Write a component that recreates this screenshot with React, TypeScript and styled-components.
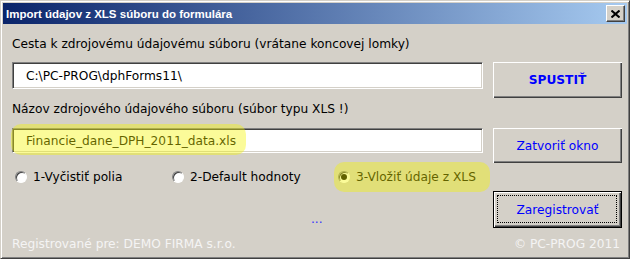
import React from 'react';
import styled, { createGlobalStyle } from 'styled-components';

const GlobalStyle = createGlobalStyle`
  html, body {
    margin: 0;
    padding: 0;
    background: #d4d0c8;
  }
  * {
    box-sizing: border-box;
  }
`;

const uiFont = `"DejaVu Sans", "Liberation Sans", sans-serif`;

const Window = styled.div`
  width: 630px;
  height: 259px;
  background: #d4d0c8;
  border-top: 1px solid #d4d0c8;
  border-left: 1px solid #d4d0c8;
  border-right: 1px solid #404040;
  border-bottom: 1px solid #404040;
  box-shadow: inset 1px 1px 0 #ffffff, inset -1px -1px 0 #808080;
  padding: 2px;
  display: flex;
  flex-direction: column;
  font-family: ${uiFont};
  font-size: 12.2px;
  color: #000;
`;

const TitleBar = styled.div`
  height: 21px;
  flex: none;
  display: flex;
  align-items: center;
  justify-content: space-between;
  padding: 0 2px 0 3px;
  background: linear-gradient(to right, #0a246a 0%, #a6caf0 100%);
`;

const Title = styled.div`
  color: #fff;
  font-family: "Liberation Sans", Arial, sans-serif;
  font-weight: bold;
  font-size: 11.5px;
`;

const CloseButton = styled.div`
  width: 19px;
  height: 17px;
  background: #d4d0c8;
  border-top: 1px solid #fff;
  border-left: 1px solid #fff;
  border-right: 1px solid #404040;
  border-bottom: 1px solid #404040;
  box-shadow: inset -1px -1px 0 #808080;
  display: flex;
  align-items: center;
  justify-content: center;
`;

const Body = styled.div`
  flex: 1;
  display: flex;
  flex-direction: column;
  padding: 12px 5px 0 9px;
`;

const Label = styled.div<{ $top: number }>`
  height: 16px;
  line-height: 16px;
  margin-top: ${(p) => p.$top}px;
  white-space: nowrap;
`;

const Row = styled.div<{ $top: number }>`
  display: flex;
  align-items: flex-start;
  gap: 10px;
  margin-top: ${(p) => p.$top}px;
`;

const LeftCell = styled.div`
  width: 471px;
  position: relative;
  align-self: stretch;
`;

const TextField = styled.div<{ $h: number }>`
  height: ${(p) => p.$h}px;
  background: #fff;
  border-top: 1px solid #808080;
  border-left: 1px solid #808080;
  border-right: 1px solid #ffffff;
  border-bottom: 1px solid #ffffff;
  box-shadow: inset 1px 1px 0 #404040, inset -1px -1px 0 #d4d0c8;
  display: flex;
  align-items: center;
  padding-left: 13px;
  white-space: nowrap;
`;

const Button = styled.div<{ $h: number; $bold?: boolean; $default?: boolean }>`
  width: 129px;
  height: ${(p) => p.$h}px;
  flex: none;
  background: #d4d0c8;
  color: #0000ff;
  font-weight: ${(p) => (p.$bold ? 'bold' : 'normal')};
  display: flex;
  align-items: center;
  justify-content: center;
  position: relative;
  border: ${(p) => (p.$default ? '1px solid #000' : 'none')};
  box-shadow: inset 1px 1px 0 #fff, inset -1px -1px 0 #404040, inset -2px -2px 0 #808080;
`;

const FocusRect = styled.div`
  position: absolute;
  inset: 3px 4px 4px 3px;
  border: 1px dotted #000;
`;

const Highlight = styled.div<{ $l: number; $t: number; $w: number; $h: number }>`
  position: absolute;
  left: ${(p) => p.$l}px;
  top: ${(p) => p.$t}px;
  width: ${(p) => p.$w}px;
  height: ${(p) => p.$h}px;
  border-radius: 10px;
  background: rgba(245, 245, 0, 0.4);
  pointer-events: none;
`;

const RadioRow = styled.div`
  margin-top: 6px;
  height: 16px;
  display: flex;
  align-items: center;
  padding-left: 3px;
`;

const RadioItem = styled.div<{ $w: number }>`
  width: ${(p) => p.$w}px;
  height: 16px;
  display: flex;
  align-items: center;
  gap: 6px;
  position: relative;
  white-space: nowrap;
`;

const RadioDot = styled.div<{ $checked?: boolean }>`
  width: 12px;
  height: 12px;
  border-radius: 50%;
  background: #ffffff;
  border: 1px solid;
  border-color: #808080 #ffffff #ffffff #808080;
  box-shadow: inset 1px 1px 0 #404040;
  display: flex;
  align-items: center;
  justify-content: center;
  flex: none;
  &::after {
    content: '';
    display: ${(p) => (p.$checked ? 'block' : 'none')};
    width: 6px;
    height: 6px;
    border-radius: 50%;
    background: #000;
  }
`;

const Dots = styled.div`
  position: absolute;
  left: 299px;
  bottom: 3px;
  color: #3333ff;
  line-height: 12px;
`;

const Footer = styled.div`
  height: 22px;
  flex: none;
  display: flex;
  align-items: center;
  justify-content: space-between;
  padding: 0 7px 2px 9px;
  color: #f4f4f4;
`;

export default function App() {
  return (
    <>
      <GlobalStyle />
      <Window>
        <TitleBar>
          <Title>Import údajov z XLS súboru do formulára</Title>
          <CloseButton>
            <svg width="9" height="8" viewBox="0 0 9 8">
              <path d="M0.5 0.5 L8.5 7.5 M8.5 0.5 L0.5 7.5" stroke="#000" strokeWidth="2" />
            </svg>
          </CloseButton>
        </TitleBar>
        <Body>
          <Label $top={0}>Cesta k zdrojovému údajovému súboru (vrátane koncovej lomky)</Label>
          <Row $top={10}>
            <LeftCell>
              <TextField $h={27}>C:\PC-PROG\dphForms11\</TextField>
            </LeftCell>
            <Button $h={36} $bold>SPUSTIŤ</Button>
          </Row>
          <Label $top={3}>Názov zdrojového údajového súboru (súbor typu XLS !)</Label>
          <Row $top={11}>
            <LeftCell>
              <TextField $h={25}>Financie_dane_DPH_2011_data.xls</TextField>
              <Highlight $l={-1} $t={-4} $w={235} $h={31} />
            </LeftCell>
            <Button $h={35}>Zatvoriť okno</Button>
          </Row>
          <RadioRow>
            <RadioItem $w={157}>
              <RadioDot />
              1-Vyčistiť polia
            </RadioItem>
            <RadioItem $w={166}>
              <RadioDot />
              2-Default hodnoty
            </RadioItem>
            <RadioItem $w={150}>
              <Highlight $l={-4} $t={-7} $w={156} $h={30} />
              <RadioDot $checked />
              3-Vložiť údaje z XLS
            </RadioItem>
          </RadioRow>
          <Row $top={6}>
            <LeftCell>
              <Dots>...</Dots>
            </LeftCell>
            <Button $h={37} $default>
              <FocusRect />
              Zaregistrovať
            </Button>
          </Row>
        </Body>
        <Footer>
          <span>Registrované pre: DEMO FIRMA s.r.o.</span>
          <span>© PC-PROG 2011</span>
        </Footer>
      </Window>
    </>
  );
}
